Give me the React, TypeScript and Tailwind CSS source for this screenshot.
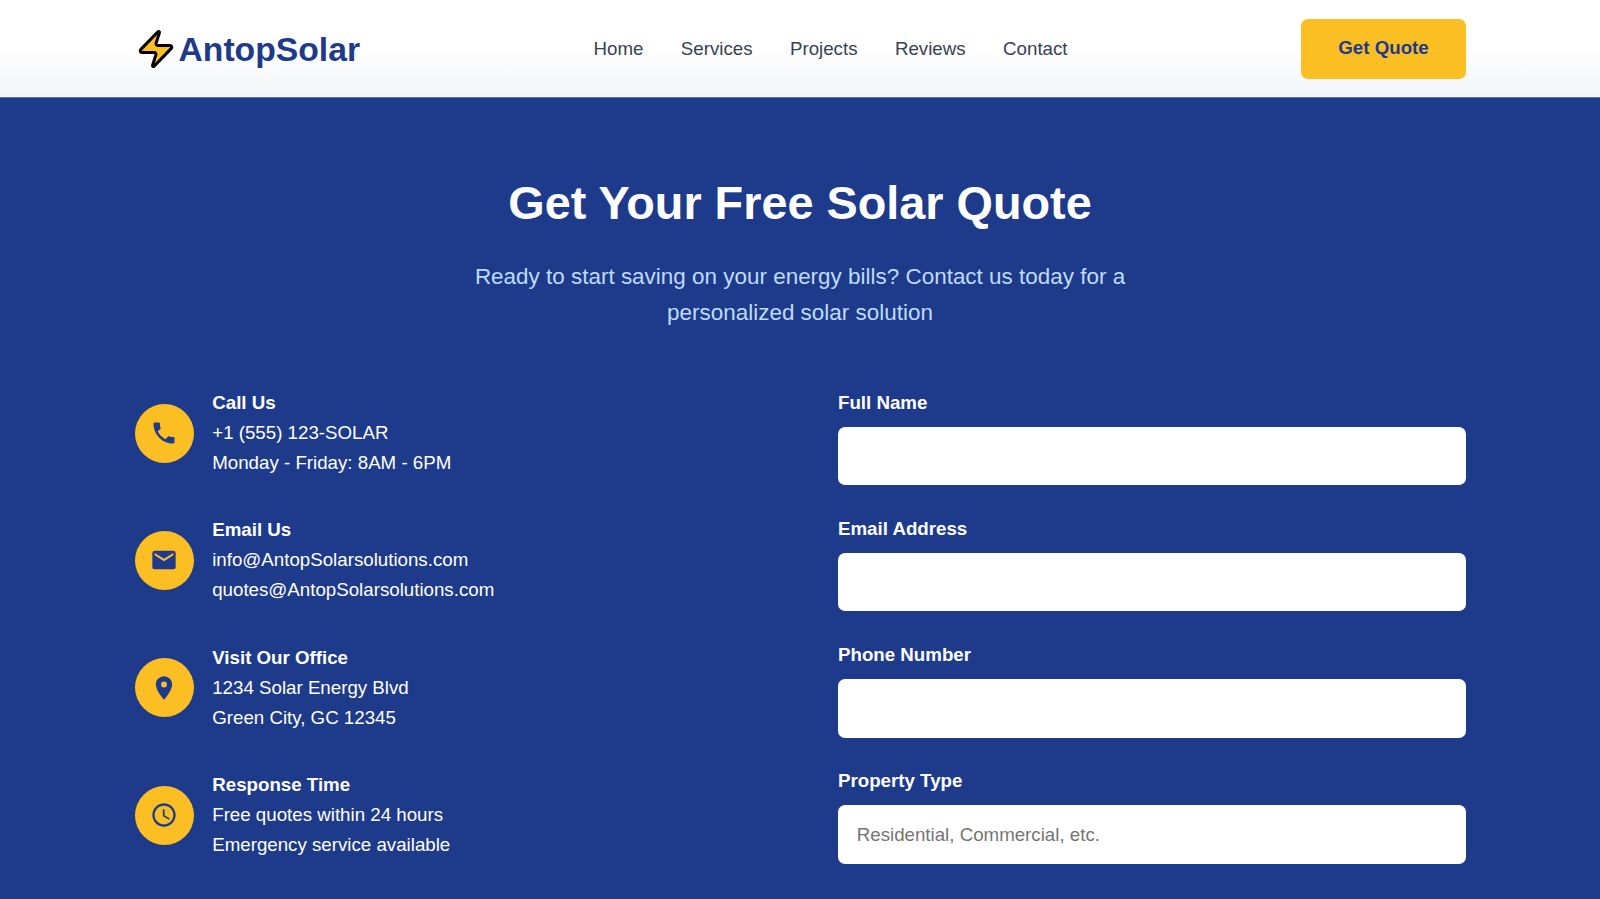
import type { ReactNode } from "react";
import { MdAccessTime, MdEmail, MdLocationOn, MdPhone } from "react-icons/md";

const navLinks = ["Home", "Services", "Projects", "Reviews", "Contact"];

const contactItems: { title: string; lines: string[]; icon: ReactNode }[] = [
  {
    title: "Call Us",
    lines: ["+1 (555) 123-SOLAR", "Monday - Friday: 8AM - 6PM"],
    icon: <MdPhone className="h-7 w-7 text-[#1e3a8a]" />,
  },
  {
    title: "Email Us",
    lines: ["info@AntopSolarsolutions.com", "quotes@AntopSolarsolutions.com"],
    icon: <MdEmail className="h-7 w-7 text-[#1e3a8a]" />,
  },
  {
    title: "Visit Our Office",
    lines: ["1234 Solar Energy Blvd", "Green City, GC 12345"],
    icon: <MdLocationOn className="h-7 w-7 text-[#1e3a8a]" />,
  },
  {
    title: "Response Time",
    lines: ["Free quotes within 24 hours", "Emergency service available"],
    icon: <MdAccessTime className="h-7 w-7 text-[#1e3a8a]" />,
  },
];

const fields = [
  { label: "Full Name", placeholder: "" },
  { label: "Email Address", placeholder: "" },
  { label: "Phone Number", placeholder: "" },
  { label: "Property Type", placeholder: "Residential, Commercial, etc." },
];

export default function App() {
  return (
    <div className="h-[899px] overflow-hidden bg-[#1e3a8a] font-['Liberation_Sans',Arial,sans-serif]">
      <header className="h-[98px] border-b border-[#5a70ab] bg-gradient-to-b from-white via-white to-[#f3f4f6]">
        <div className="mx-auto flex h-full w-[1332px] items-center justify-between pt-px pl-px">
          <div className="flex items-center gap-[1.5px]">
            <svg viewBox="0 0 24 24" className="h-[42px] w-[42px]" fill="#fbbf24" stroke="#000" strokeWidth="1.75" strokeLinejoin="round" strokeLinecap="round">
              <path d="M4 14a1 1 0 0 1-.78-1.63l9.9-10.2a.5.5 0 0 1 .86.46l-1.92 6.02A1 1 0 0 0 13 10h7a1 1 0 0 1 .78 1.63l-9.9 10.2a.5.5 0 0 1-.86-.46l1.92-6.02A1 1 0 0 0 11 14z" />
            </svg>
            <span className="text-[33.7px] font-bold text-[#1e3a8a]">AntopSolar</span>
          </div>
          <nav className="flex items-center gap-[37.44px] text-[18.72px] text-[#374151]">
            {navLinks.map((link) => (
              <a key={link} href="#">
                {link}
              </a>
            ))}
          </nav>
          <button className="mb-px h-[60px] w-[165px] rounded-[7px] bg-[#fbbf24] text-[18.72px] font-bold text-[#1e3a8a]">Get Quote</button>
        </div>
      </header>

      <section className="pt-[72px]">
        <div className="mx-auto w-[1331px]">
          <h2 className="text-center text-[46.8px] leading-[66px] font-bold text-white">Get Your Free Solar Quote</h2>
          <p className="mx-auto mt-[23px] w-[700px] text-center text-[22.46px] leading-9 text-[#bfdbfe]">
            Ready to start saving on your energy bills? Contact us today for a personalized solar solution
          </p>

          <div className="mt-[57px] grid grid-cols-2 gap-[75px]">
            <div className="flex flex-col gap-[37.44px]">
              {contactItems.map((item) => (
                <div key={item.title} className="flex items-center gap-[18.72px]">
                  <div className="flex h-[59px] w-[59px] items-center justify-center rounded-full bg-[#fbbf24]">{item.icon}</div>
                  <div className="text-[18.72px] leading-[30px] text-white">
                    <p className="font-bold">{item.title}</p>
                    {item.lines.map((line) => (
                      <p key={line}>{line}</p>
                    ))}
                  </div>
                </div>
              ))}
            </div>

            <form className="flex flex-col gap-[29.75px] pt-[0.5px] pl-[0.5px]">
              {fields.map((field) => (
                <div key={field.label}>
                  <label className="mb-[11px] block text-[18.72px] leading-[27px] font-bold text-white">{field.label}</label>
                  <input
                    className="h-[58.5px] w-full rounded-[7px] bg-white px-[18.72px] text-[18.72px] placeholder:text-[#757575]"
                    placeholder={field.placeholder}
                  />
                </div>
              ))}
            </form>
          </div>
        </div>
      </section>
    </div>
  );
}
